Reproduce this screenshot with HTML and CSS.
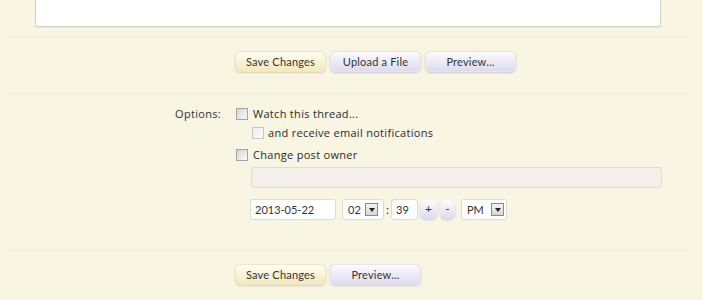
FILE: index.html
```html
<!DOCTYPE html>
<html>
<head>
<meta charset="utf-8">
<link rel="stylesheet" href="styles.css">
</head>
<body>
<div class="page">
  <div class="editor-wrap"><div class="editor"></div></div>
  <div class="divider"></div>
  <div class="form-row buttons-row">
    <div class="label"></div>
    <div class="ctrls buttons">
      <span class="btn primary">Save Changes</span>
      <span class="btn">Upload a File</span>
      <span class="btn">Preview...</span>
    </div>
  </div>
  <div class="divider"></div>
  <div class="form-row options-row">
    <div class="label">Options:</div>
    <div class="ctrls">
      <div class="check"><span class="box"></span>Watch this thread...</div>
      <div class="check sub"><span class="box light"></span>and receive email notifications</div>
      <div class="check"><span class="box"></span>Change post owner</div>
      <div class="owner-input"></div>
      <div class="date-row">
        <span class="field date">2013-05-22</span>
        <span class="field select hour">02<span class="arrow"></span></span>
        <span class="colon">:</span>
        <span class="field minute">39</span>
        <span class="mini plus">+</span>
        <span class="mini minus">-</span>
        <span class="field select ampm">PM<span class="arrow"></span></span>
      </div>
    </div>
  </div>
  <div class="divider bottom"></div>
  <div class="form-row buttons-row last">
    <div class="label"></div>
    <div class="ctrls buttons">
      <span class="btn primary">Save Changes</span>
      <span class="btn">Preview...</span>
    </div>
  </div>
</div>
</body>
</html>
```

FILE: styles.css
```css
html, body {
  margin: 0;
  padding: 0;
  background: #f8f5e3;
}
.page {
  width: 703px;
  height: 300px;
  overflow: hidden;
  font-family: "Open Sans", "DejaVu Sans", sans-serif;
  font-size: 11px;
  letter-spacing: 0.3px;
  color: #2a2a2a;
}
.editor-wrap {
  padding-left: 35px;
  height: 27px;
}
.editor {
  width: 624px;
  height: 26px;
  background: #fff;
  border: 1px solid #d3d0c4;
  border-top: none;
  box-shadow: 0 1px 0 #ebe8d8;
}
.divider {
  margin: 9px 15px 0 8px;
  height: 1px;
  background: #efecd6;
}
.form-row {
  display: flex;
}
.label {
  width: 221px;
  text-align: right;
  color: #333;
  flex: none;
}
.ctrls {
  margin-left: 14px;
  width: 427px;
}
.buttons-row {
  padding-top: 14px;
  height: 41px;
}
.buttons {
  display: flex;
  gap: 4px;
}
.btn {
  font-family: Lato, "Open Sans", sans-serif;
  font-size: 11px;
  letter-spacing: 0.2px;
  color: #333;
  height: 19px;
  line-height: 19px;
  width: 89px;
  text-align: center;
  border-radius: 6px;
  border: 1px solid #e6e3ea;
  background: linear-gradient(#fbfbfd, #dddcef);
  box-shadow: 0 1px 2px rgba(120, 115, 150, 0.35);
  box-sizing: content-box;
}
.btn.primary {
  border-color: #ece6cc;
  background: linear-gradient(#fffdf2, #f3e9bb);
  box-shadow: 0 1px 2px rgba(150, 140, 90, 0.35);
}
.divider + .buttons-row {
  height: 33px;
}
.options-row {
  padding-top: 12px;
  height: 144px;
}
.options-row .label {
  line-height: 15px;
}
.check {
  display: flex;
  align-items: center;
  height: 15px;
  margin-bottom: 4px;
  line-height: 15px;
}
.check:nth-child(2) {
  margin-bottom: 7px;
}
.check.sub {
  padding-left: 16px;
}
.box {
  width: 10px;
  height: 10px;
  border: 1px solid #a3a3a3;
  background: linear-gradient(135deg, #d4d4d4, #fafafa);
  margin-right: 5px;
  margin-left: 1px;
  flex: none;
}
.check.sub .box {
  margin-left: 1px;
  margin-right: 4px;
}
.box.light {
  border-color: #c8c8c8;
  background: linear-gradient(135deg, #ececec, #fcfcfc);
}
.owner-input {
  margin-left: 16px;
  margin-top: 5px;
  width: 409px;
  height: 19px;
  border: 1px solid #e0ddd0;
  border-radius: 3px;
  background: #f2f0e8;
}
.date-row {
  display: flex;
  align-items: center;
  margin-top: 11px;
  margin-left: 15px;
  height: 21px;
  letter-spacing: 0;
}
.field {
  height: 19px;
  line-height: 19px;
  border: 1px solid #dedbd0;
  border-radius: 3px;
  background: #fff;
  font-family: Lato, "Open Sans", sans-serif;
  font-size: 11px;
  color: #333;
  padding-left: 4px;
  box-sizing: content-box;
  display: flex;
  align-items: center;
  flex: none;
}
.date {
  width: 80px;
}
.select {
  justify-content: space-between;
}
.hour {
  margin-left: 6px;
  padding-left: 5px;
  padding-right: 5px;
  width: 30px;
}
.ampm {
  margin-left: 6px;
  padding-left: 5px;
  padding-right: 2px;
  width: 37px;
}
.arrow {
  width: 13px;
  height: 13px;
  border: 1px solid #8a8a8a;
  background: linear-gradient(#f4f4f4, #d6d6d6);
  position: relative;
  box-sizing: border-box;
}
.arrow::after {
  content: "";
  position: absolute;
  left: 3px;
  top: 4px;
  border-left: 3px solid transparent;
  border-right: 3px solid transparent;
  border-top: 4px solid #222;
}
.colon {
  width: 7px;
  text-align: center;
  font-family: Lato, sans-serif;
  font-size: 12px;
  color: #333;
}
.minute {
  width: 21px;
}
.mini {
  height: 19px;
  line-height: 18px;
  text-align: center;
  border-radius: 6px;
  background: linear-gradient(#fbfbfd, #dcdbee);
  box-shadow: 0 1px 2px rgba(120, 115, 150, 0.35);
  font-family: Lato, sans-serif;
  font-size: 12px;
  color: #333;
  flex: none;
}
.plus {
  width: 17px;
  margin-left: 2px;
}
.minus {
  width: 15px;
  margin-left: 3px;
}
.divider.bottom {
  margin-top: 0;
}
.buttons-row.last {
  padding-top: 13px;
  height: 41px;
}
```
